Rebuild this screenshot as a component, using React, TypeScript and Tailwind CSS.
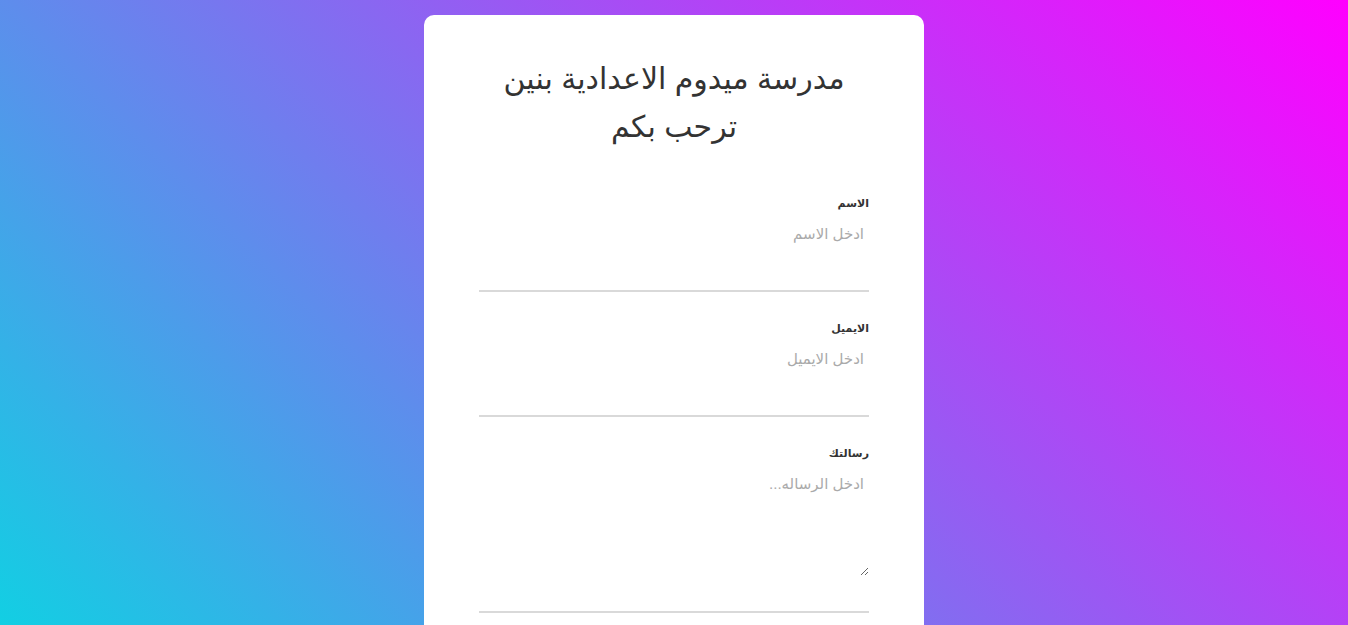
import React from "react";

export default function App() {
  return (
    <div
      className="h-screen w-full overflow-hidden bg-[linear-gradient(45deg,#12cfe3,#ff00ff)] pt-[15px]"
      style={{ fontFamily: '"Liberation Sans", "DejaVu Sans", sans-serif' }}
    >
      <div className="mx-auto w-[500px] rounded-[10px] bg-white px-[55px] pt-[40px] pb-[40px]">
        <h1 dir="rtl" className="-mx-[55px] whitespace-nowrap text-center text-[30px] leading-[48px] font-normal text-[#333] mb-[45px]">
          مدرسة ميدوم الاعدادية بنين
          <br />
          ترحب بكم
        </h1>
        <form className="flex flex-col">
          <div className="border-b-2 border-[#d9d9d9] pb-[42px] mb-[29px]">
            <label dir="rtl" className="block text-right text-[11px] leading-[14px] font-bold text-[#333] mb-[10px]">الاسم</label>
            <input
              type="text"
              placeholder="ادخل الاسم"
              className="block w-full px-[5px] py-[5px] text-right text-[15px] leading-[18px] text-[#333] outline-none placeholder:text-[#aaa]"
            />
          </div>
          <div className="border-b-2 border-[#d9d9d9] pb-[42px] mb-[29px]">
            <label dir="rtl" className="block text-right text-[11px] leading-[14px] font-bold text-[#333] mb-[10px]">الايميل</label>
            <input
              type="email"
              placeholder="ادخل الايميل"
              className="block w-full px-[5px] py-[5px] text-right text-[15px] leading-[18px] text-[#333] outline-none placeholder:text-[#aaa]"
            />
          </div>
          <div className="border-b-2 border-[#d9d9d9] pb-[35px] mb-[29px]">
            <label dir="rtl" className="block text-right text-[11px] leading-[14px] font-bold text-[#333] mb-[10px]">رسالتك</label>
            <textarea
              placeholder={"ادخل الرساله...\u200F"}
              className="block h-[106px] w-full px-[5px] py-[5px] text-right text-[15px] leading-[18px] text-[#333] outline-none placeholder:text-[#aaa]"
            />
          </div>
        </form>
      </div>
    </div>
  );
}
